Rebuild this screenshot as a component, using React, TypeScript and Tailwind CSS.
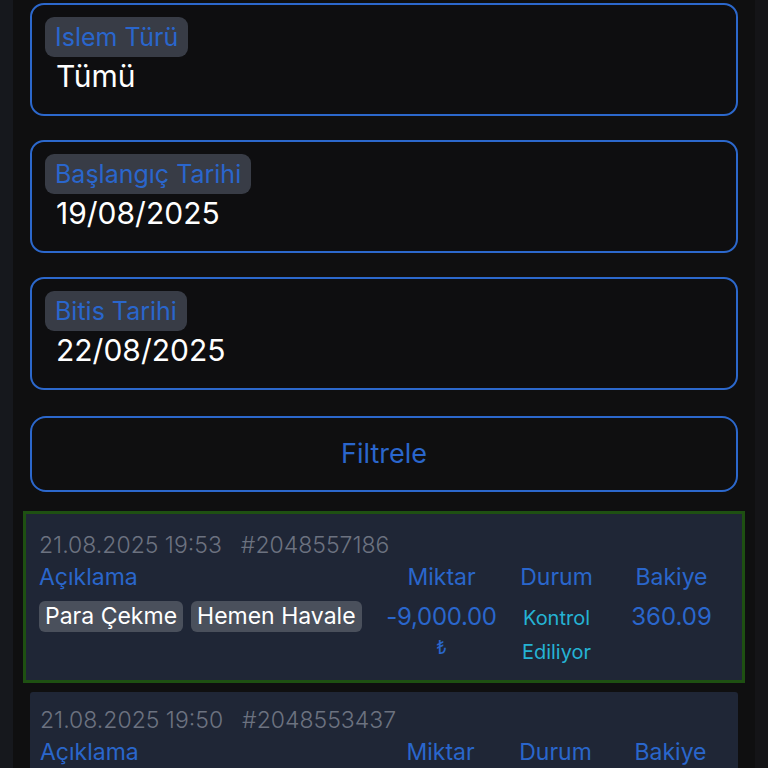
import React from 'react';

const font = { fontFamily: 'Inter, "Noto Sans", sans-serif' };

interface FieldProps {
    label: string;
    value: string;
}

const Field: React.FC<FieldProps> = ({ label, value }) => (
    <div className="h-[113px] rounded-[14px] border-2 border-[#2c68cc] bg-[#0e0e10] pl-[13px] pt-[12px]">
        <span className="inline-block h-[40px] rounded-[9px] bg-[#383c46] px-[10px] text-[25px] leading-[40px] text-[#2a66cc]">
            {label}
        </span>
        <div className="pl-[11px] text-[30px] leading-[36px] text-white mt-[1px]">{value}</div>
    </div>
);

interface Row {
    date: string;
    id: string;
    tags: string[];
    amount: string;
    status: string[];
    balance: string;
}

const TxCard: React.FC<{ row: Row; selected?: boolean }> = ({ row, selected }) => (
    <div
        className={
            selected
                ? '-mx-[7px] border-[3px] border-[#1e5012] bg-[#1f2636] px-[13px] pt-[18px] pb-[11px]'
                : 'rounded-[3px] bg-[#1f2636] px-[10px] pt-[15px] pb-[18px]'
        }
    >
        <div className="text-[23px] leading-[26px] font-light text-[#6c7280]">
            {row.date}
            <span className="ml-[19px]">{row.id}</span>
        </div>
        <div className="grid grid-cols-[1fr_115px_115px_115px] text-[23px] leading-[36px] text-[#2a66cc] mt-[1px]">
            <div>Açıklama</div>
            <div className="text-center">Miktar</div>
            <div className="text-center">Durum</div>
            <div className="text-center">Bakiye</div>
        </div>
        <div className="grid grid-cols-[1fr_115px_115px_115px] mt-[6px]">
            <div className="flex gap-[8px] items-start">
                {row.tags.map((t) => (
                    <span key={t} className="rounded-[6px] bg-[#4a505c] px-[6px] text-[23px] leading-[31px] text-white">
                        {t}
                    </span>
                ))}
            </div>
            <div className="text-center text-[24px] leading-[31px] text-[#2a66cc] tracking-[-0.3px]">
                {row.amount}
                <div className="text-[18px] leading-[31px]">₺</div>
            </div>
            <div className="text-center text-[20px] leading-[34px] text-[#25b3d4]">
                {row.status.map((s) => (
                    <div key={s}>{s}</div>
                ))}
            </div>
            <div className="text-center text-[24px] leading-[31px] text-[#2a66cc]">{row.balance}</div>
        </div>
    </div>
);

export default function App() {
    const rows: Row[] = [
        {
            date: '21.08.2025 19:53',
            id: '#2048557186',
            tags: ['Para Çekme', 'Hemen Havale'],
            amount: '-9,000.00',
            status: ['Kontrol', 'Ediliyor'],
            balance: '360.09',
        },
        {
            date: '21.08.2025 19:50',
            id: '#2048553437',
            tags: ['Para Çekme', 'Hemen Havale'],
            amount: '-9,000.00',
            status: ['Kontrol', 'Ediliyor'],
            balance: '9,360.09',
        },
    ];

    return (
        <div className="flex h-[768px] w-full overflow-hidden bg-[#0f0f10]" style={font}>
            <div className="w-[13px] shrink-0 bg-[#16181d]" />
            <div className="flex-1 px-[17px] pt-[3px]">
                <div className="flex flex-col gap-[24px]">
                    <Field label="Islem Türü" value="Tümü" />
                    <Field label="Başlangıç Tarihi" value="19/08/2025" />
                    <Field label="Bitis Tarihi" value="22/08/2025" />
                    <button className="mt-[2px] h-[76px] w-full rounded-[16px] border-2 border-[#2c68cc] text-[27px] text-[#2a66cc]">
                        Filtrele
                    </button>
                </div>
                <div className="mt-[19px] flex flex-col gap-[9px]">
                    <TxCard row={rows[0]} selected />
                    <TxCard row={rows[1]} />
                </div>
            </div>
            <div className="w-[13px] shrink-0 bg-[#141417]" />
        </div>
    );
}
